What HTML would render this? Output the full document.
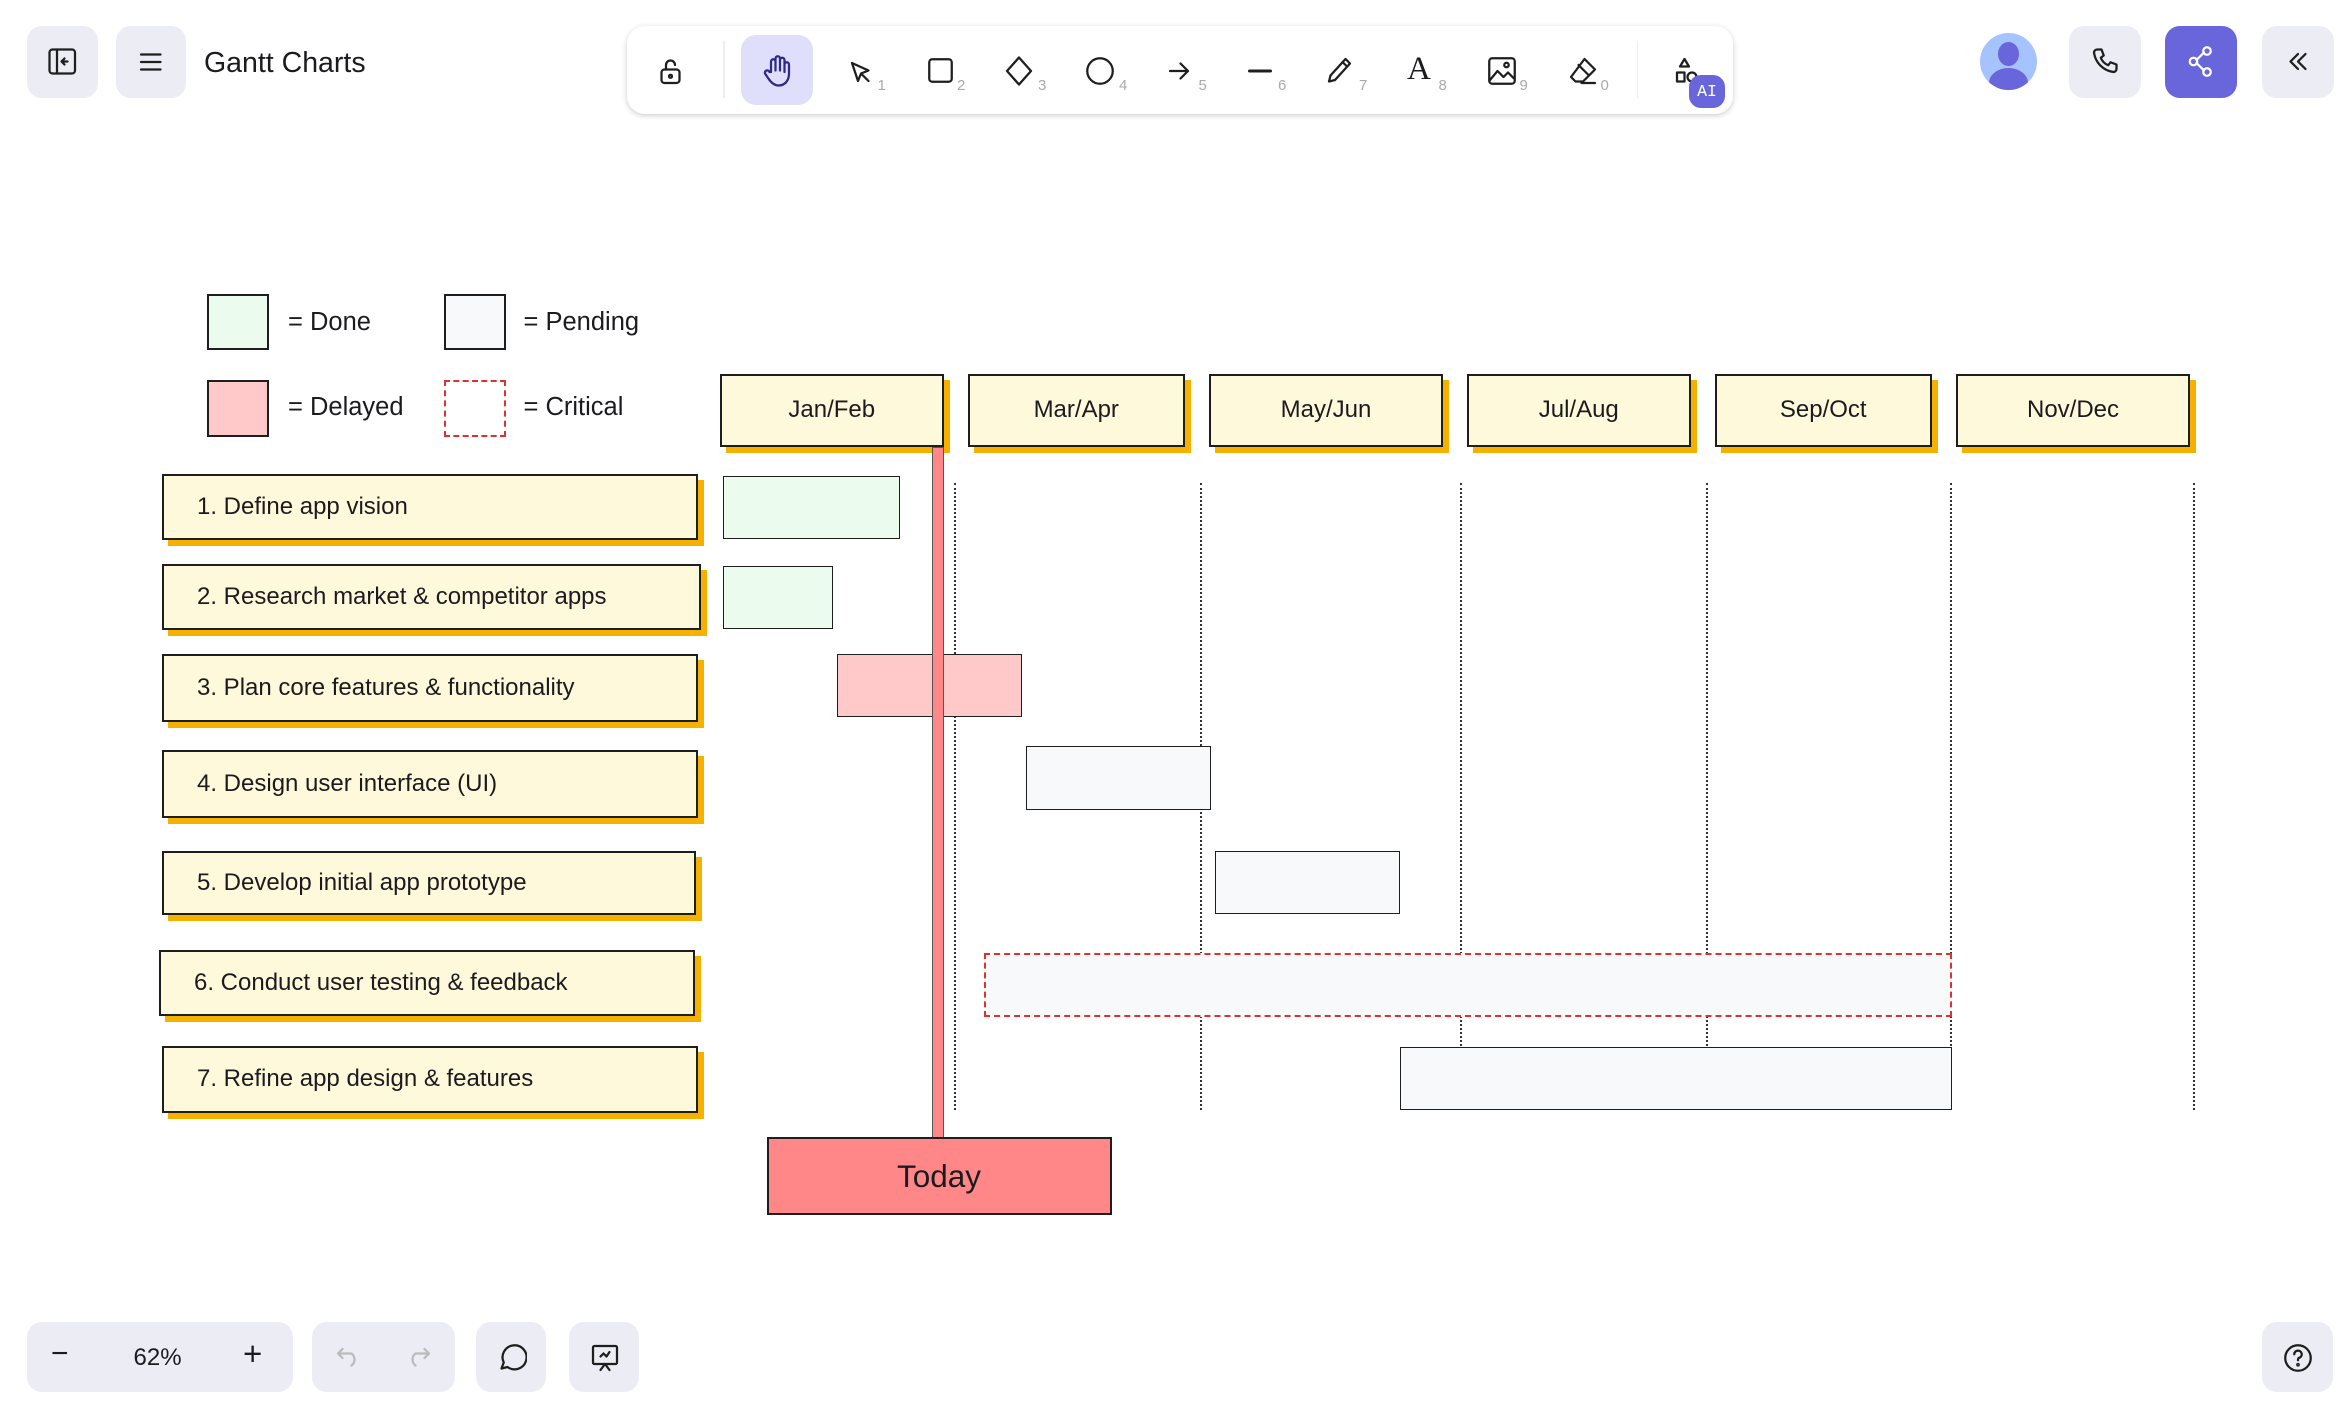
<!DOCTYPE html>
<html><head><meta charset="utf-8"><style>
html,body{margin:0;padding:0;background:#fff;overflow:hidden}
#w{position:relative;width:1560px;height:940px;zoom:1.5;font-family:"Liberation Sans",sans-serif;color:#1b1b1f}
.a{position:absolute;box-sizing:border-box}
.btn{background:#ececf4;border-radius:10px}
.t{border:1.5px solid #1e1e1e;background:#fff9db;box-shadow:4px 4px 0 #f5b000;font-size:16px;display:flex;align-items:center;padding-left:22px}
.h{border:1.5px solid #1e1e1e;background:#fff9db;box-shadow:4px 4px 0 #f5b000;font-size:16px;display:flex;align-items:center;justify-content:center}
.b{border:1.2px solid #1e1e1e}
.g{background:#ebfbee}.p{background:#f8f9fa}.r{background:#ffc9c9}
.d{border-left:1.5px dotted #333;width:0;top:322px;height:418px}
.lg{font-size:17px}
.k{font-size:10px;color:#aaa;position:absolute}
svg{stroke:#1e1e1e;fill:none;stroke-width:1.5;stroke-linecap:round;stroke-linejoin:round}
</style></head><body><div id="w">
<div class="a btn" style="left:18px;top:17px;width:47px;height:48px"><svg class="a" style="left:14px;top:15px" width="19" height="18" viewBox="0 0 19 18"><rect x="1" y="1" width="17" height="16" rx="2"/><path d="M6 1v16M13 9h-4M11 7l-2 2 2 2"/></svg></div>
<div class="a btn" style="left:77px;top:17px;width:47px;height:48px"><svg class="a" style="left:15px;top:16px" width="17" height="16"><path d="M2 3h13M2 8h13M2 13h13"/></svg></div>
<div class="a" style="left:136px;top:31px;font-size:19px">Gantt Charts</div>

<div class="a" style="left:418px;top:17px;width:737px;height:59px;background:#fff;border-radius:12px;box-shadow:0 1px 4px rgba(0,0,0,.2)">
<svg class="a" style="left:20px;top:20px" width="18" height="20"><rect x="3" y="9" width="12" height="9" rx="2"/><path d="M6 9V6a3 3 0 0 1 6 0"/><circle cx="9" cy="13.5" r="1"/></svg>
<div class="a" style="left:64px;top:10px;width:1px;height:38px;background:#eee"></div>
<div class="a" style="left:76px;top:6px;width:48px;height:47px;background:#e0dffb;border-radius:10px"><svg class="a" style="left:14px;top:13px;stroke:#2f2a8a" width="20" height="22"><path d="M6 12V5a1.5 1.5 0 0 1 3 0v6V3a1.5 1.5 0 0 1 3 0v8V4a1.5 1.5 0 0 1 3 0v8V7a1.5 1.5 0 0 1 3 0v6c0 5-3 8-7 8-3 0-5-2-7-5l-2-3a1.5 1.5 0 0 1 3-1z"/></svg></div>
<svg class="a" style="left:148px;top:23px" width="16" height="16"><path d="M2 2l4 12 2-5 5-2z M8 9l5 5"/></svg><span class="k" style="left:167px;top:34px">1</span>
<svg class="a" style="left:200px;top:21px" width="18" height="18"><rect x="1.5" y="1.5" width="15" height="15" rx="2"/></svg><span class="k" style="left:220px;top:34px">2</span>
<svg class="a" style="left:251px;top:20px" width="20" height="20"><path d="M10 1l8 9-8 9-8-9z"/></svg><span class="k" style="left:274px;top:34px">3</span>
<svg class="a" style="left:305px;top:20px" width="20" height="20"><circle cx="10" cy="10" r="8.5"/></svg><span class="k" style="left:328px;top:34px">4</span>
<svg class="a" style="left:360px;top:22px" width="16" height="16"><path d="M2 8h12M9 3l5 5-5 5"/></svg><span class="k" style="left:381px;top:34px">5</span>
<svg class="a" style="left:414px;top:22px" width="16" height="16"><path d="M1 8h14" stroke-width="2"/></svg><span class="k" style="left:434px;top:34px">6</span>
<svg class="a" style="left:466px;top:20px" width="18" height="20"><path d="M13 2l3 3-10 11-4 1 1-4z M11 4l3 3"/></svg><span class="k" style="left:488px;top:34px">7</span>
<div class="a" style="left:520px;top:17px;font-family:'Liberation Serif',serif;font-size:22px">A</div><span class="k" style="left:541px;top:34px">8</span>
<svg class="a" style="left:573px;top:20px" width="20" height="20"><rect x="1.5" y="1.5" width="17" height="17" rx="2"/><path d="M2 16l5-6 4 4 3-3 4 4"/><circle cx="13" cy="6" r="1.5"/></svg><span class="k" style="left:595px;top:34px">9</span>
<svg class="a" style="left:627px;top:20px" width="20" height="20"><path d="M11 2l7 7-8 8H5l-3-3zM7 6l7 7M9 18h9"/></svg><span class="k" style="left:649px;top:34px">0</span>
<div class="a" style="left:673px;top:10px;width:1px;height:38px;background:#eee"></div>
<svg class="a" style="left:698px;top:20px" width="18" height="20"><path d="M7 2l3 5H4z"/><rect x="2" y="11" width="5" height="6"/><circle cx="12" cy="14" r="3"/></svg>
<div class="a" style="left:708px;top:33px;width:24px;height:22px;border-radius:8px;background:#6965db;color:#fff;font-size:11px;font-family:'Liberation Mono',monospace;text-align:center;line-height:22px">AI</div>
</div>

<div class="a" style="left:1320px;top:22px;width:38px;height:38px;border-radius:50%;background:#a5c3ff;overflow:hidden"><div class="a" style="left:12px;top:6px;width:14px;height:16px;border-radius:50%;background:#6965db"></div><div class="a" style="left:6px;top:23px;width:26px;height:20px;border-radius:50%;background:#6965db"></div></div>
<div class="a btn" style="left:1379px;top:17px;width:48px;height:48px"><svg class="a" style="left:15px;top:15px" width="18" height="18"><path d="M4 1h3l1.5 4-2 1.5a9 9 0 0 0 5 5l1.5-2 4 1.5v3c0 1-1 2-2 2A15 15 0 0 1 2 3c0-1 1-2 2-2z"/></svg></div>
<div class="a" style="left:1443px;top:17px;width:48px;height:48px;background:#6965db;border-radius:10px"><svg class="a" style="left:14px;top:13px;stroke:#fff" width="20" height="22"><circle cx="14" cy="4" r="2.5"/><circle cx="5" cy="11" r="2.5"/><circle cx="14" cy="18" r="2.5"/><path d="M7 10l5-5M7 12l5 5"/></svg></div>
<div class="a btn" style="left:1508px;top:17px;width:48px;height:48px"><svg class="a" style="left:16px;top:17px" width="16" height="14"><path d="M8 2L3 7l5 5M13 2L8 7l5 5"/></svg></div>

<div class="a b g" style="left:138px;top:196px;width:41px;height:37px;border-width:1.5px"></div><div class="a lg" style="left:192px;top:205px">= Done</div>
<div class="a b p" style="left:296px;top:196px;width:41px;height:37px;border-width:1.5px"></div><div class="a lg" style="left:349px;top:205px">= Pending</div>
<div class="a b r" style="left:138px;top:253px;width:41px;height:38px;border-width:1.5px"></div><div class="a lg" style="left:192px;top:262px">= Delayed</div>
<div class="a" style="left:296px;top:253px;width:41px;height:38px;border:1.5px dashed #e03131"></div><div class="a lg" style="left:349px;top:262px">= Critical</div>

<div class="a h" style="left:480px;top:249px;width:149px;height:49px">Jan/Feb</div>
<div class="a h" style="left:645px;top:249px;width:145px;height:49px">Mar/Apr</div>
<div class="a h" style="left:806px;top:249px;width:156px;height:49px">May/Jun</div>
<div class="a h" style="left:978px;top:249px;width:149px;height:49px">Jul/Aug</div>
<div class="a h" style="left:1143px;top:249px;width:145px;height:49px">Sep/Oct</div>
<div class="a h" style="left:1304px;top:249px;width:156px;height:49px">Nov/Dec</div>

<div class="a d" style="left:636px"></div><div class="a d" style="left:800px"></div><div class="a d" style="left:973px"></div><div class="a d" style="left:1137px"></div><div class="a d" style="left:1300px"></div><div class="a d" style="left:1462px"></div>

<div class="a t" style="left:108px;top:316px;width:357px;height:44px">1. Define app vision</div>
<div class="a t" style="left:108px;top:376px;width:359px;height:44px">2. Research market &amp; competitor apps</div>
<div class="a t" style="left:108px;top:436px;width:357px;height:45px">3. Plan core features &amp; functionality</div>
<div class="a t" style="left:108px;top:500px;width:357px;height:45px">4. Design user interface (UI)</div>
<div class="a t" style="left:108px;top:567px;width:356px;height:43px">5. Develop initial app prototype</div>
<div class="a t" style="left:106px;top:633px;width:357px;height:44px">6. Conduct user testing &amp; feedback</div>
<div class="a t" style="left:108px;top:697px;width:357px;height:45px">7. Refine app design &amp; features</div>

<div class="a b g" style="left:482px;top:317px;width:118px;height:42px"></div>
<div class="a b g" style="left:482px;top:377px;width:73px;height:42px"></div>
<div class="a b r" style="left:558px;top:436px;width:123px;height:42px"></div>
<div class="a b p" style="left:684px;top:497px;width:123px;height:43px"></div>
<div class="a b p" style="left:810px;top:567px;width:123px;height:42px"></div>
<div class="a p" style="left:656px;top:635px;width:645px;height:43px;border:1.5px dashed #e03131"></div>
<div class="a b p" style="left:933px;top:698px;width:368px;height:42px"></div>

<div class="a" style="left:621px;top:298px;width:8px;height:461px;background:#ff8787;border:1px solid #555"></div>
<div class="a" style="left:511px;top:758px;width:230px;height:52px;background:#ff8787;border:1.5px solid #1e1e1e;font-size:21px;display:flex;align-items:center;justify-content:center">Today</div>

<div class="a" style="left:18px;top:881px;width:177px;height:47px;background:#ececf4;border-radius:10px">
<div class="a" style="left:16px;top:10px;font-size:20px">−</div><div class="a" style="left:71px;top:15px;font-size:16px">62%</div><div class="a" style="left:144px;top:9px;font-size:22px">+</div></div>
<div class="a btn" style="left:208px;top:881px;width:95px;height:47px"><svg class="a" style="left:15px;top:16px;stroke:#bbb" width="18" height="14"><path d="M5 2L2 5l3 3M2 5h9a5 5 0 0 1 0 8"/></svg><svg class="a" style="left:62px;top:16px;stroke:#bbb" width="18" height="14"><path d="M13 2l3 3-3 3M16 5H7a5 5 0 0 0 0 8"/></svg></div>
<div class="a btn" style="left:317px;top:881px;width:47px;height:47px"><svg class="a" style="left:14px;top:14px" width="20" height="20"><path d="M3 17l1.5-4A8 8 0 1 1 7 16z"/></svg></div>
<div class="a btn" style="left:379px;top:881px;width:47px;height:47px"><svg class="a" style="left:14px;top:14px" width="20" height="20"><rect x="2" y="2" width="16" height="12" rx="1"/><path d="M7 18l3-4 3 4M7 9l2-2 2 2 2-3"/></svg></div>
<div class="a btn" style="left:1508px;top:881px;width:47px;height:47px"><svg class="a" style="left:14px;top:14px" width="20" height="20"><circle cx="10" cy="10" r="8.5"/><path d="M7.5 7.5a2.5 2.5 0 1 1 3 2.5c-.5.2-.5.8-.5 1.5"/><circle cx="10" cy="14.5" r=".5"/></svg></div>
</div></body></html>
